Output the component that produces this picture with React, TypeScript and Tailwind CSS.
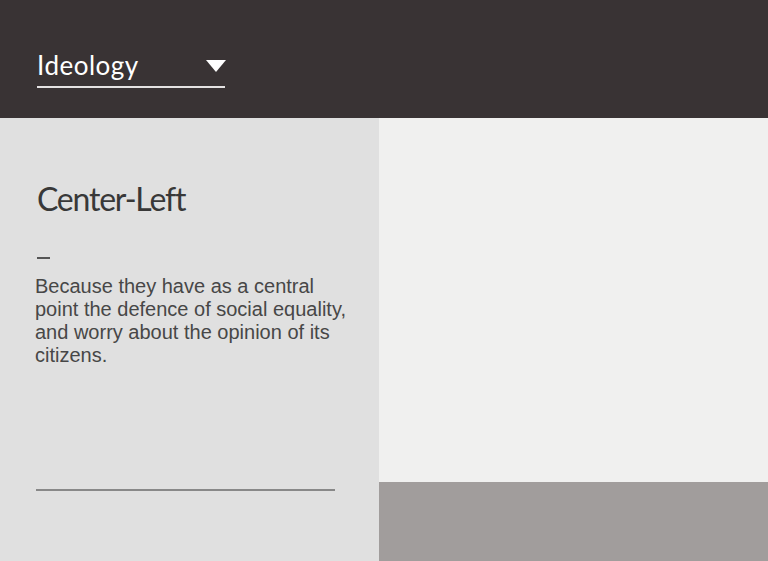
const App = () => {
  return (
    <main className="flex flex-col h-[561px] w-[768px] overflow-hidden" style={{ fontFamily: '"Liberation Sans", Arial, sans-serif' }}>
      <header className="h-[118px] bg-[#393334] shrink-0 pl-[37px] pt-[48px]">
        <div className="w-[188px] border-b-2 border-[#e4e2e2] flex items-center justify-between h-[40px] pb-[4px]">
          <span className="text-[26px] leading-none text-white tracking-[0.5px]" style={{ fontFamily: 'Lato, "Noto Sans", sans-serif' }}>
            Ideology
          </span>
          <svg width="20" height="12" viewBox="0 0 20 12" className="mr-[-1px] mb-[-2px]">
            <polygon points="0,0 20,0 10,12" fill="#ffffff" />
          </svg>
        </div>
      </header>

      <div className="flex flex-1">
        <section className="w-[379px] bg-[#e0e0e0] pl-[36px] pr-[20px] pt-[61px] flex flex-col">
          <h1 className="text-[32px] leading-[40px] text-[#383838] tracking-[-1.2px] ml-[1px]" style={{ fontFamily: 'Lato, "Noto Sans", sans-serif' }}>
            Center-Left
          </h1>
          <div className="w-[13px] h-[2px] bg-[#555] mt-[38px] ml-[1px]" />
          <p className="mt-[16px] text-[20px] leading-[23px] text-[#474747] ml-[-1px]">
            Because they have as a central point the defence of social equality, and worry about the opinion of its citizens.
          </p>
          <div className="mt-[122px] w-[299px] h-[2px] bg-[#888888]" />
        </section>

        <section className="flex-1 flex flex-col">
          <div className="h-[364px] bg-[#f0f0ef]" />
          <div className="flex-1 bg-[#a19d9c]" />
        </section>
      </div>
    </main>
  )
}

export default App
